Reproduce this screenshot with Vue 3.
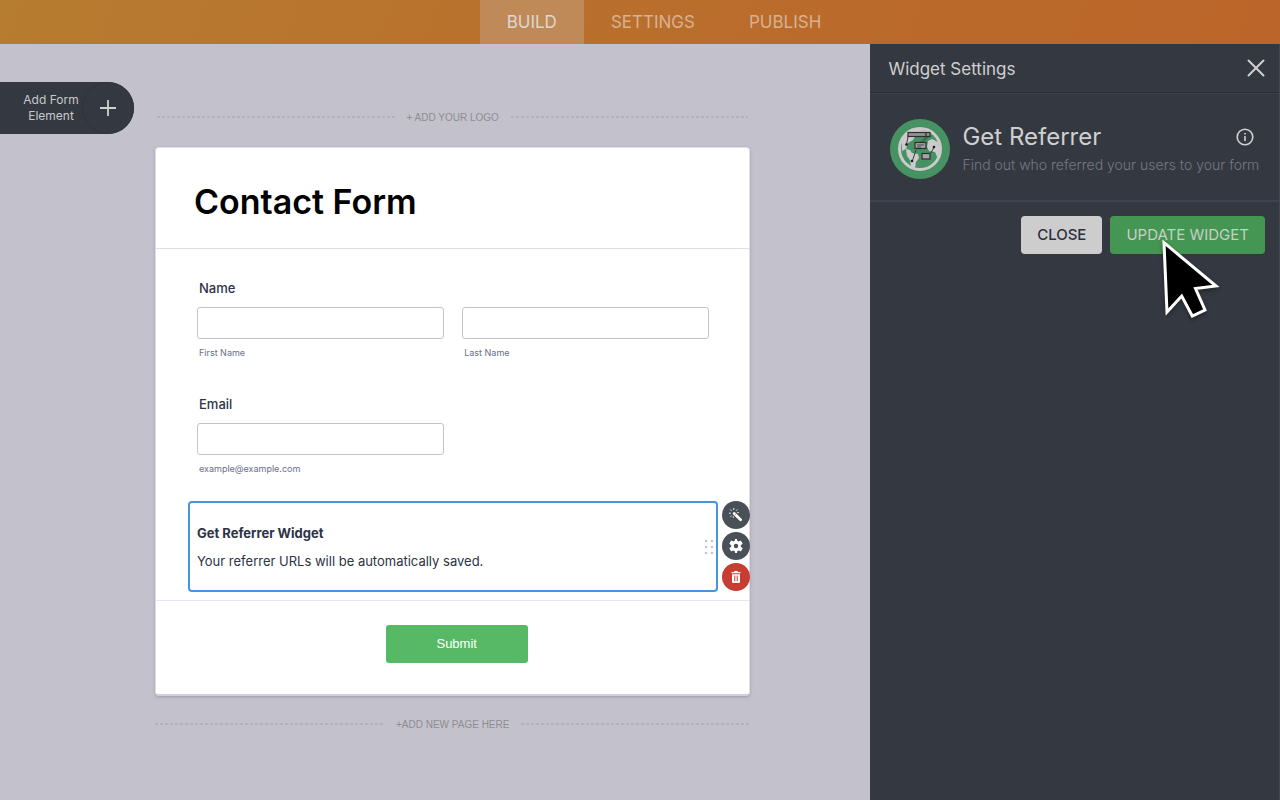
<script setup>
import { ref } from "vue";

const tabs = ["BUILD", "SETTINGS", "PUBLISH"];
const activeTab = ref("BUILD");

const firstName = ref("");
const lastName = ref("");
const email = ref("");
</script>

<template>
  <div class="builder">
    <header class="topbar">
      <nav class="tabs">
        <button
          v-for="tab in tabs"
          :key="tab"
          type="button"
          :class="['tab', { active: tab === activeTab }]"
          @click="activeTab = tab"
        >
          {{ tab }}
        </button>
      </nav>
    </header>

    <div class="workspace">
      <main class="canvas">
        <button type="button" class="add-element">
          <span class="add-label">Add Form Element</span>
          <span class="add-circle">
            <svg width="16" height="16" viewBox="0 0 16 16">
              <path d="M8 0v16M0 8h16" stroke="#d0d0cf" stroke-width="1.8" />
            </svg>
          </span>
        </button>

        <div class="form-column">
          <div class="divider logo-divider"><span>+ ADD YOUR LOGO</span></div>

          <form class="card" @submit.prevent>
            <div class="card-head">
              <h1>Contact Form</h1>
            </div>

            <div class="card-body">
              <fieldset class="field">
                <legend class="label">Name</legend>
                <div class="row">
                  <div class="cell">
                    <input id="first" v-model="firstName" type="text" />
                    <label for="first" class="sub">First Name</label>
                  </div>
                  <div class="cell">
                    <input id="last" v-model="lastName" type="text" />
                    <label for="last" class="sub">Last Name</label>
                  </div>
                </div>
              </fieldset>

              <div class="field">
                <label for="email" class="label">Email</label>
                <div class="row">
                  <div class="cell">
                    <input id="email" v-model="email" type="email" />
                    <span class="sub">example@example.com</span>
                  </div>
                  <div class="cell"></div>
                </div>
              </div>
            </div>

            <div class="widget-row">
              <section class="widget">
                <div>
                  <h2>Get Referrer Widget</h2>
                  <p>Your referrer URLs will be automatically saved.</p>
                </div>
                <svg class="grip" width="10" height="16" viewBox="0 0 10 16" fill="#c3c3d0">
                  <circle cx="2" cy="2" r="1.3" /><circle cx="8" cy="2" r="1.3" />
                  <circle cx="2" cy="8" r="1.3" /><circle cx="8" cy="8" r="1.3" />
                  <circle cx="2" cy="14" r="1.3" /><circle cx="8" cy="14" r="1.3" />
                </svg>
              </section>
              <div class="tools">
                <button type="button" class="tool" aria-label="Wizard">
                  <svg width="14" height="14" viewBox="0 0 14 14">
                    <path d="M5.2 5.4 11.6 11.8" stroke="#fff" stroke-width="2.8" stroke-linecap="round" />
                    <path d="M7 5.8 5.7 7.1" stroke="#4a5058" stroke-width=".6" />
                    <path
                      d="M4.8 0v2M1.3 1.5l1.3 1.3M8.4 1.4 7.2 2.7M0 5.2h1.8M1.5 8.8l1.2-1.2M8.2 4.6h1.6M4.4 8.4v1.5"
                      stroke="#fff"
                      stroke-width=".9"
                    />
                  </svg>
                </button>
                <button type="button" class="tool" aria-label="Settings">
                  <svg width="14" height="14" viewBox="0 0 24 24" fill="#fff">
                    <path
                      d="M20.2 13.3c.1-.4.1-.9.1-1.3s0-.9-.1-1.3l2.8-2.2c.3-.2.3-.5.2-.8l-2.7-4.6c-.2-.3-.5-.4-.8-.3l-3.3 1.3c-.7-.5-1.4-1-2.3-1.3L13.6 0c0-.3-.3-.5-.6-.5h-2c-.4 0-.6.2-.7.5l-.5 2.8c-.8.3-1.6.8-2.3 1.3L4.2 2.8c-.3-.1-.6 0-.8.3L.8 7.7c-.2.3-.1.6.2.8l2.8 2.2c-.1.4-.1.9-.1 1.3s0 .9.1 1.3L1 15.5c-.3.2-.3.5-.2.8l2.7 4.6c.2.3.5.4.8.3l3.3-1.3c.7.5 1.4 1 2.3 1.3l.5 2.8c0 .3.3.5.6.5h2c.4 0 .6-.2.7-.5l.5-2.8c.8-.3 1.6-.8 2.3-1.3l3.3 1.3c.3.1.6 0 .8-.3l2.7-4.6c.2-.3.1-.6-.2-.8zM12 15.8a3.8 3.8 0 1 1 0-7.6 3.8 3.8 0 0 1 0 7.6z"
                    />
                  </svg>
                </button>
                <button type="button" class="tool delete" aria-label="Delete">
                  <svg width="10" height="12" viewBox="0 0 10 12">
                    <path d="M.5 1.6h9M3.2.6h3.6" stroke="#fff" stroke-width="1.3" />
                    <path d="M1 3.3h8v7.4Q9 12 7.7 12H2.3Q1 12 1 10.7z" fill="#fff" />
                    <path d="M3.8 4.6v5.6M6.2 4.6v5.6" stroke="#c73d31" />
                  </svg>
                </button>
              </div>
            </div>

            <div class="card-foot">
              <button type="submit" class="submit">Submit</button>
            </div>
          </form>

          <div class="divider page-divider"><span>+ADD NEW PAGE HERE</span></div>
        </div>
      </main>

      <aside class="panel">
        <div class="panel-head">
          <h2>Widget Settings</h2>
          <button type="button" class="icon-btn" aria-label="Close panel">
            <svg width="18" height="18" viewBox="0 0 18 18">
              <path d="M1.5 1.5l15 15M16.5 1.5l-15 15" stroke="#d2d2d2" stroke-width="1.9" stroke-linecap="round" />
            </svg>
          </button>
        </div>

        <div class="widget-info">
          <svg class="globe" width="60" height="60" viewBox="0 0 60 60">
            <circle cx="30" cy="30" r="30" fill="#479263" />
            <circle cx="30" cy="30" r="20.5" fill="#479263" stroke="#cbcbcb" stroke-width="3" />
            <path d="M12 22 17 13l8-3 13 2 2 4H26l-3 5-5 3-2 6-4 2z" fill="#cbcbcb" />
            <path d="M16 30l4 1 2 3 6 1 1 4-3 4-1 6-4-1-1-7-3-4z" fill="#cbcbcb" />
            <path d="M38 22l4-2 6 3 2 8-2 9-3-7-6-1-2-4z" fill="#cbcbcb" />
            <path d="M39 18l-5 5h-4l5-5z" fill="#39704f" />
            <g fill="none" stroke="#2e2e30" stroke-width="1.2">
              <path d="M18.5 15.5 16.5 25.5M26 31 22.5 41.5M44 28l-3 6" stroke-width=".9" />
              <rect x="18" y="13.5" width="22" height="4" fill="#929292" />
              <path d="M36 13.5v4" />
              <rect x="25" y="23.5" width="11" height="6" fill="#a5a5a5" />
              <path d="M27 26h7M27 28h4" stroke-width=".8" />
              <rect x="32" y="34.5" width="8" height="5.5" fill="#a5a5a5" />
            </g>
            <circle cx="16.5" cy="25.5" r="1.3" fill="#161618" />
            <circle cx="22" cy="42" r="1.3" fill="#161618" />
            <circle cx="44" cy="28" r="1.3" fill="#161618" />
          </svg>
          <div class="info-text">
            <div class="info-title">
              <h3>Get Referrer</h3>
              <button type="button" class="icon-btn" aria-label="Information">
                <svg width="18" height="18" viewBox="0 0 18 18" fill="none" stroke="#d2d2d2" stroke-width="1.6">
                  <circle cx="9" cy="9" r="7.8" />
                  <path d="M9 8v5M9 5v1.6" />
                </svg>
              </button>
            </div>
            <p>Find out who referred your users to your form</p>
          </div>
        </div>

        <div class="panel-actions">
          <button type="button" class="btn">CLOSE</button>
          <div class="update">
            <button type="button" class="btn primary">UPDATE WIDGET</button>
            <svg class="pointer" width="70" height="90" viewBox="0 0 70 90">
              <polygon
                points="8,10.7 60,54 39.5,56.5 49,78 36.3,84 25.7,64 11,80"
                fill="#000"
                stroke="#fff"
                stroke-width="3"
              />
            </svg>
          </div>
        </div>
      </aside>
    </div>
  </div>
</template>

<style>
body {
  margin: 0;
  background: #c3c2cc;
}
</style>

<style scoped>
* {
  box-sizing: border-box;
}

.builder {
  display: flex;
  flex-direction: column;
  min-height: 100vh;
  font-family: Inter, "Liberation Sans", sans-serif;
  background: #c3c2cc;
}

h1,
h2,
h3,
p {
  margin: 0;
}

button {
  padding: 0;
  border: 0;
  font-family: inherit;
  cursor: pointer;
}

svg {
  display: block;
}

/* top navigation */
.topbar {
  display: flex;
  justify-content: center;
  height: 44px;
  padding-left: 48px;
  background: linear-gradient(110deg, #b67c30 0%, #b9732d 32%, #ba6a2b 68%, #bc652a 100%);
}

.tabs {
  display: flex;
}

.tab {
  padding: 0 27px;
  background: transparent;
  color: #d6b292;
  font-size: 17px;
  font-weight: 400;
}

.tab.active {
  background: #bf8a57;
  color: #dcd8d3;
}

.workspace {
  display: flex;
  flex: 1;
}

/* canvas */
.canvas {
  display: flex;
  flex: 1;
  align-items: flex-start;
  gap: 21px;
  padding: 38px 120px 38px 0;
}

.add-element {
  display: flex;
  align-items: center;
  justify-content: space-between;
  width: 134px;
  height: 52px;
  padding-left: 20px;
  border-radius: 0 26px 26px 0;
  background: #343841;
  color: #c9c9c9;
}

.add-label {
  width: 62px;
  font-size: 12px;
  line-height: 16px;
}

.add-circle {
  display: flex;
  align-items: center;
  justify-content: center;
  width: 52px;
  height: 52px;
  border: 1px solid #2f333b;
  border-radius: 50%;
}

.form-column {
  flex: 1;
  padding-top: 27px;
}

.divider {
  display: flex;
  align-items: center;
  gap: 12px;
  height: 16px;
  color: #8e8d92;
  font-family: "Liberation Sans", Arial, sans-serif;
  font-size: 10px;
}

.divider::before,
.divider::after {
  content: "";
  flex: 1;
  height: 2px;
  background: repeating-linear-gradient(90deg, #b3b2bb 0 3px, transparent 3px 5px);
}

.logo-divider {
  padding: 0 2px;
}

.page-divider {
  margin-top: 20px;
}

.card {
  margin-top: 22px;
  border: 1px solid #dfdfeb;
  border-bottom: 2px solid #cdd0e0;
  border-radius: 4px;
  background: #fff;
  box-shadow: 0 1px 3px rgba(60, 60, 90, 0.3);
}

.card-head {
  display: flex;
  align-items: center;
  height: 101px;
  padding: 8px 38px 0;
  border-bottom: 1px solid #dfdee6;
}

h1 {
  color: #000;
  font-size: 34px;
  font-weight: 600;
  line-height: 44px;
}

.card-body {
  padding: 31px 40px 0 41px;
}

.field {
  min-width: 0;
  height: 116px;
  margin: 0;
  padding: 0;
  border: 0;
}

.label {
  display: block;
  height: 27px;
  padding: 0 2px;
  color: #2c3345;
  font-size: 13px;
  font-weight: 500;
  line-height: 16px;
}

.row {
  display: flex;
  gap: 18px;
}

.cell {
  display: flex;
  flex: 1;
  flex-direction: column;
  gap: 8px;
  min-width: 0;
}

input {
  width: 100%;
  height: 32px;
  padding: 0 8px;
  border: 1px solid #c3c3d0;
  border-radius: 3px;
  background: #fff;
  font-family: inherit;
  font-size: 13px;
}

.sub {
  padding: 0 2px;
  color: #66708a;
  font-size: 9px;
  line-height: 12px;
}

.widget-row {
  display: flex;
  gap: 4px;
  padding: 0 0 8px 32px;
  margin-top: -11px;
  border-bottom: 1px solid #e6e6f0;
}

.widget {
  display: flex;
  flex: 1;
  align-items: center;
  justify-content: space-between;
  height: 91px;
  padding: 0 2px 0 7px;
  border: 2px solid #4794e0;
  border-radius: 4px;
  color: #2c3345;
  line-height: 20px;
}

.widget h2 {
  margin-bottom: 8px;
  font-size: 13px;
  font-weight: 700;
}

.widget p {
  font-size: 13px;
}

/* the round buttons sit on the card's own border */
.tools {
  display: flex;
  flex-direction: column;
  gap: 3px;
  margin-right: -1px;
}

.tool {
  display: flex;
  align-items: center;
  justify-content: center;
  width: 28px;
  height: 28px;
  border-radius: 50%;
  background: #4a5058;
}

.tool.delete {
  background: #c73d31;
}

.card-foot {
  display: flex;
  justify-content: center;
  padding: 24px 0 31px 8px;
}

.submit {
  width: 142px;
  height: 38px;
  padding-bottom: 2px;
  border-radius: 3px;
  background: #57b966;
  color: #fff;
  font-family: "Liberation Sans", Arial, sans-serif;
  font-size: 13px;
}

/* settings panel */
.panel {
  width: 32%;
  min-width: 400px;
  border-right: 1px solid #44484f;
  background: #343841;
  color: #cfcfcf;
}

.panel-head {
  display: flex;
  align-items: center;
  justify-content: space-between;
  height: 49px;
  padding: 0 14px 0 18px;
  border-bottom: 1px solid #292d35;
}

.panel-head h2 {
  padding-top: 2px;
  font-size: 17px;
  font-weight: 400;
}

.icon-btn {
  background: transparent;
}

.widget-info {
  display: flex;
  align-items: center;
  gap: 12px;
  height: 109px;
  padding: 4px 25px 0 20px;
  border-top: 1px solid #3a404c;
  border-bottom: 2px solid #3d4351;
}

.globe {
  flex: none;
}

.info-text {
  flex: 1;
  min-width: 0;
}

.info-title {
  display: flex;
  align-items: center;
  justify-content: space-between;
}

h3 {
  font-size: 24px;
  font-weight: 400;
  line-height: 32px;
}

.info-text p {
  color: #747884;
  font-size: 14px;
  font-weight: 300;
  line-height: 24px;
  white-space: nowrap;
}

.panel-actions {
  display: flex;
  justify-content: flex-end;
  gap: 8px;
  padding: 14px;
}

.update {
  position: relative;
}

.btn {
  height: 38px;
  padding: 0 16px 2px;
  border-radius: 4px;
  background: #cdcdcd;
  color: #2b3040;
  font-size: 15px;
  font-weight: 500;
}

.btn.primary {
  background: #449652;
  color: #c8d0c9;
  font-weight: 400;
}

/* mouse pointer over the update button */
.pointer {
  position: absolute;
  top: 16px;
  left: 46px;
  pointer-events: none;
  filter: drop-shadow(0 2px 2px rgba(0, 0, 0, 0.35));
}
</style>
